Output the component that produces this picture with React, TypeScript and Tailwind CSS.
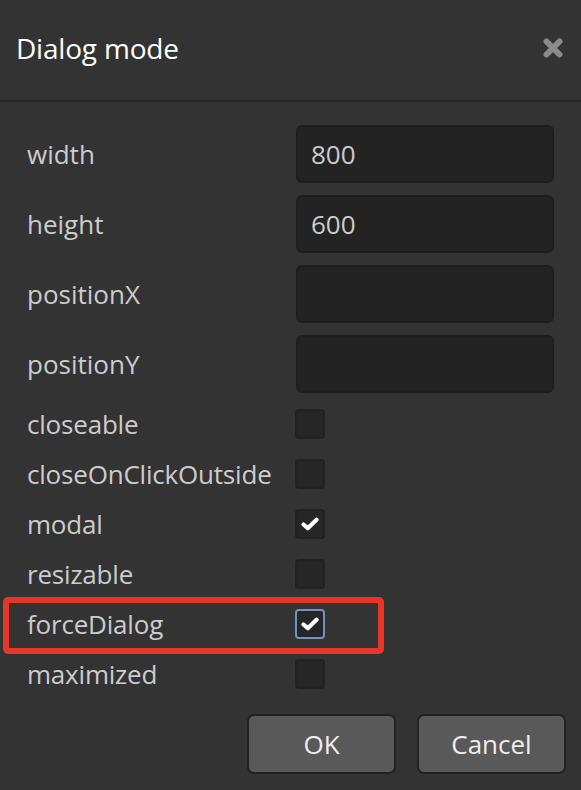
import React from 'react';

const inputRows = [
    { label: 'width', value: '800' },
    { label: 'height', value: '600' },
    { label: 'positionX', value: '' },
    { label: 'positionY', value: '' },
];

const checkRows = [
    { label: 'closeable', checked: false },
    { label: 'closeOnClickOutside', checked: false },
    { label: 'modal', checked: true },
    { label: 'resizable', checked: false },
    { label: 'forceDialog', checked: true, focused: true },
    { label: 'maximized', checked: false },
];

const Check: React.FC<{ checked: boolean; focused?: boolean }> = ({ checked, focused }) => (
    <div
        className={
            'w-[30px] h-[30px] rounded-[4px] bg-[#262626] border-2 flex items-center justify-center ' +
            (focused ? 'border-[#7393c2]' : 'border-[#222222]')
        }
    >
        {checked && (
            <svg width="18" height="14" viewBox="0 0 18 14">
                <path d="M2.5 7.5 L6.8 11.2 L15.5 2.8" fill="none" stroke="#ffffff" strokeWidth="4.2" strokeLinecap="round" strokeLinejoin="round" />
            </svg>
        )}
    </div>
);

const App: React.FC = () => {
    return (
        <div className="relative w-[581px] h-[790px] overflow-hidden bg-[#333333] font-['Open_Sans',sans-serif]">
            <div className="h-[102px] flex items-center justify-between pl-4 pr-[18px] pb-[5px] border-b-2 border-[#262626]">
                <h1 className="text-[28px] text-white leading-none tracking-[-0.2px]">Dialog mode</h1>
                <svg width="20" height="20" viewBox="0 0 20 20">
                    <path d="M3.5 3.5 L16.5 16.5 M16.5 3.5 L3.5 16.5" stroke="#8a8a8a" strokeWidth="6" strokeLinecap="round" />
                </svg>
            </div>

            <div className="px-[27px] pt-[23px] flex flex-col gap-3">
                {inputRows.map(r => (
                    <div key={r.label} className="flex items-center h-[58px]">
                        <label className="w-[269px] text-[26px] text-[#cccccc]">{r.label}</label>
                        <div className="w-[258px] h-[58px] rounded-[6px] bg-[#232323] border-2 border-[#1e1e1e] flex items-center pl-[13px] text-[26px] text-[#cccccc]">
                            {r.value}
                        </div>
                    </div>
                ))}
                {checkRows.map(r => (
                    <div key={r.label} className="flex items-center h-[38px]">
                        <label className="w-[268px] text-[26px] text-[#cccccc] whitespace-nowrap tracking-[-0.2px]">{r.label}</label>
                        <Check checked={r.checked} focused={r.focused} />
                    </div>
                ))}
            </div>

            <div className="flex justify-end gap-[21px] pr-[15px] mt-[21px]">
                <button className="w-[149px] h-[60px] rounded-[7px] bg-[#595959] border-2 border-[#222222] text-[26px] text-[#eeeeee]">
                    OK
                </button>
                <button className="w-[149px] h-[60px] rounded-[7px] bg-[#595959] border-2 border-[#222222] text-[26px] text-[#eeeeee]">
                    Cancel
                </button>
            </div>

            <div className="absolute left-[3px] top-[597px] w-[381px] h-[57px] border-[6px] border-[#e8352a] rounded-[5px] pointer-events-none" />
        </div>
    );
};

export default App;
